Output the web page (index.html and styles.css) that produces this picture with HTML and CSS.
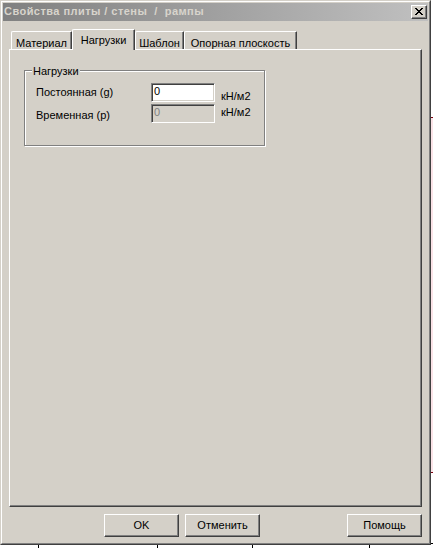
FILE: index.html
```html
<!DOCTYPE html>
<html lang="ru">
<head>
<meta charset="utf-8">
<title>Свойства плиты / стены / рампы</title>
<link rel="stylesheet" href="styles.css">
</head>
<body>
<div class="screen">
  <div class="window">
    <div class="frame">
      <div class="titlebar">
        <span class="title">Свойства плиты / стены&nbsp; / &nbsp;рампы</span>
        <div class="close">
          <svg width="8" height="7" viewBox="0 0 8 7"><path d="M0 0h2v1h1v1h2v-1h1v-1h2v1h-1v1h-1v1h-1v1h1v1h1v1h1v1h-2v-1h-1v-1h-2v1h-1v1h-2v-1h1v-1h1v-1h1v-1h-1v-1h-1v-1h-1z" fill="#000"/></svg>
        </div>
      </div>
      <div class="tabs">
        <div class="tab tab-mat">Материал</div>
        <div class="tab tab-load active">Нагрузки</div>
        <div class="tab tab-tpl">Шаблон</div>
        <div class="tab tab-plane">Опорная плоскость</div>
      </div>
      <div class="panel">
        <div class="group">
          <span class="legend">Нагрузки</span>
          <div class="col labels">
            <span>Постоянная (g)</span>
            <span>Временная (p)</span>
          </div>
          <div class="col inputs">
            <div class="edit">0</div>
            <div class="edit disabled">0</div>
          </div>
          <div class="col units">
            <span>кН/м2</span>
            <span>кН/м2</span>
          </div>
        </div>
      </div>
      <div class="buttons">
        <div class="btn">OK</div>
        <div class="btn">Отменить</div>
        <div class="btn btn-help">Помощь</div>
      </div>
    </div>
  </div>
  <div class="strip"></div>
</div>
<div class="ticks">
  <span class="tick t1"></span>
  <span class="tick t2"></span>
  <span class="tick t3"></span>
  <span class="tick t4"></span>
</div>
</body>
</html>
```
FILE: styles.css
```css
* { box-sizing: border-box; }
html, body {
  margin: 0;
  padding: 0;
  background: #fff;
  width: 433px;
  height: 548px;
  overflow: hidden;
  font-family: "Liberation Sans", Arial, sans-serif;
  font-size: 11px;
  line-height: 13px;
  color: #000;
}
.screen {
  display: flex;
  align-items: flex-start;
}
.window {
  width: 431px;
  height: 545px;
  background: #d4d0c8;
  border: 1px solid;
  border-color: #d4d0c8 #404040 #404040 #d4d0c8;
}
.frame {
  height: 100%;
  border: 1px solid;
  border-color: #fff #808080 #808080 #fff;
  padding: 1px;
  display: flex;
  flex-direction: column;
}
.titlebar {
  height: 18px;
  background: linear-gradient(90deg, #808080, #c0c0c0);
  display: flex;
  align-items: flex-start;
  justify-content: space-between;
}
.title {
  color: #d8d4cc;
  font-weight: bold;
  font-size: 11px;
  line-height: 13px;
  letter-spacing: 0.45px;
  padding: 2px 0 0 1px;
  white-space: pre;
}
.close {
  width: 16px;
  height: 14px;
  margin: 2px 1px 0 0;
  background: #d4d0c8;
  border: 1px solid;
  border-color: #fff #404040 #404040 #fff;
  box-shadow: inset -1px -1px 0 #808080;
  display: flex;
  justify-content: center;
  padding-top: 2px;
}
.close svg { display: block; }
.tabs {
  display: flex;
  align-items: flex-end;
  height: 20px;
  margin-top: 8px;
  padding-left: 8px;
}
.tab {
  height: 18px;
  padding-top: 5px;
  border-left: 1px solid #fff;
  border-top: 1px solid #fff;
  border-right: 1px solid #404040;
  box-shadow: inset -1px 0 0 #808080;
  border-top-left-radius: 2px;
  border-top-right-radius: 1px;
  text-align: center;
  white-space: nowrap;
  background: #d4d0c8;
}
.tab.active {
  height: 21px;
  padding-top: 4px;
  margin-bottom: -1px;
  position: relative;
  z-index: 1;
}
.tab-mat { width: 61px; }
.tab-load { width: 63px; }
.tab-tpl { width: 49px; }
.tab-plane { width: 113px; }
.panel {
  margin-left: 6px;
  width: 413px;
  height: 458px;
  border: 1px solid;
  border-color: #fff #404040 #404040 #fff;
  box-shadow: inset -1px -1px 0 #808080;
  padding: 20px 0 0 14px;
}
.group {
  position: relative;
  width: 241px;
  height: 76px;
  border: 1px solid #808080;
  box-shadow: inset 1px 1px 0 #fff, 1px 1px 0 #fff;
  display: flex;
  align-items: flex-start;
}
.legend {
  position: absolute;
  top: -6px;
  left: 7px;
  padding: 0 1px;
  background: #d4d0c8;
}
.col {
  display: flex;
  flex-direction: column;
}
.labels {
  width: 115px;
  margin-left: 11px;
  padding-top: 15px;
  gap: 10px;
}
.inputs {
  padding-top: 12px;
  gap: 2px;
}
.units {
  margin-left: 6px;
  padding-top: 19px;
  gap: 3px;
}
.edit {
  width: 64px;
  height: 19px;
  background: #fff;
  border: 1px solid;
  border-color: #808080 #fff #fff #808080;
  box-shadow: inset 1px 1px 0 #404040, inset -1px -1px 0 #d4d0c8;
  padding: 1px 2px 0 2px;
  line-height: 13px;
}
.edit.disabled {
  background: #d4d0c8;
  color: #808080;
}
.buttons {
  display: flex;
  margin-top: 7px;
  padding-left: 101px;
  padding-right: 6px;
  gap: 6px;
}
.btn {
  width: 75px;
  height: 23px;
  border: 1px solid;
  border-color: #fff #404040 #404040 #fff;
  box-shadow: inset -1px -1px 0 #808080;
  display: flex;
  align-items: center;
  justify-content: center;
  padding-bottom: 1px;
}
.btn-help { margin-left: auto; }
.strip {
  width: 2px;
  height: 548px;
  background: linear-gradient(180deg,
    #fff 0, #fff 117px,
    #7a0010 117px, #7a0010 118px,
    #fbe4e8 118px, #fbe4e8 472px,
    #7a0010 472px, #7a0010 473px,
    #fff 473px, #fff 543px,
    #000 543px, #000 544px,
    #fff 544px);
}
.ticks {
  display: flex;
  height: 3px;
  position: relative;
  top: -3px;
}
.tick {
  width: 1px;
  height: 3px;
  background: #000;
}
.t1 { margin-left: 38px; }
.t2 { margin-left: 118px; }
.t3 { margin-left: 94px; }
.t4 { margin-left: 116px; }
```
